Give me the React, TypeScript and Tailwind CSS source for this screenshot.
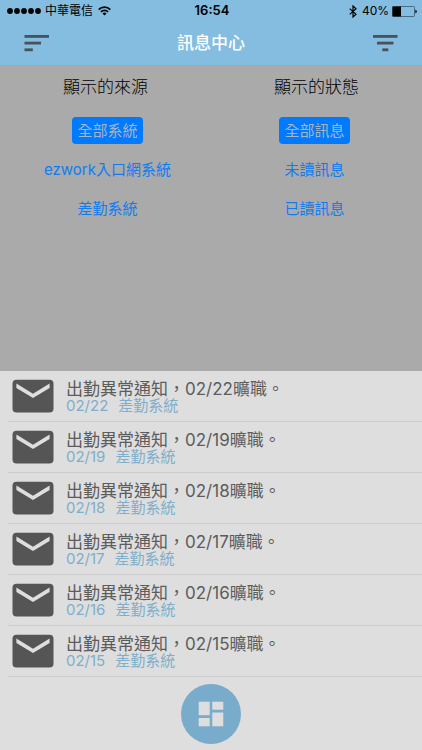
import React from 'react';

interface Message {
  id: number;
  date: string;
  source: string;
}

const messages: Message[] = [
  { id: 1, date: '02/22', source: '差勤系統' },
  { id: 2, date: '02/19', source: '差勤系統' },
  { id: 3, date: '02/18', source: '差勤系統' },
  { id: 4, date: '02/17', source: '差勤系統' },
  { id: 5, date: '02/16', source: '差勤系統' },
  { id: 6, date: '02/15', source: '差勤系統' },
];

const sources = ['全部系統', 'ezwork入口網系統', '差勤系統'];
const statuses = ['全部訊息', '未讀訊息', '已讀訊息'];

function StatusBar() {
  return (
    <div className="grid grid-cols-3 items-center h-[22px] pl-[7px] pr-[5px] text-xs text-black">
      <div className="flex items-center">
        <svg width="35" height="8" viewBox="0 0 35 8" fill="currentColor">
          <circle cx="3" cy="4" r="2.9" />
          <circle cx="10" cy="4" r="2.9" />
          <circle cx="17" cy="4" r="2.9" />
          <circle cx="24" cy="4" r="2.9" />
          <circle cx="31" cy="4" r="2.9" />
        </svg>
        <span className="ml-[3px] whitespace-nowrap">中華電信</span>
        <svg className="ml-[5px]" width="13" height="10" viewBox="0 0 13 10" fill="none" stroke="currentColor" strokeWidth="1.7">
          <path d="M0.7 3.6a8.2 8.2 0 0 1 11.6 0" />
          <path d="M2.9 5.9a5.1 5.1 0 0 1 7.2 0" />
          <path d="M6.5 9.6 4.5 7.5a2.8 2.8 0 0 1 4 0z" fill="currentColor" stroke="none" />
        </svg>
      </div>
      <span className="text-center font-semibold text-[13px]">16:54</span>
      <div className="flex items-center justify-end">
        <svg width="8" height="13" viewBox="0 0 8 13" fill="none" stroke="currentColor" strokeWidth="1.2">
          <path d="M0.7 3.6 7 9.2 4 12V1l3 2.8-6.3 5.6" />
        </svg>
        <span className="ml-[5px]">40%</span>
        <svg className="ml-[3px]" width="25" height="11" viewBox="0 0 25 11">
          <rect x="0.5" y="0.5" width="22" height="10" rx="1" fill="none" stroke="#36566a" strokeWidth="0.8" />
          <rect x="0.5" y="0.5" width="8.5" height="10" fill="#000" />
          <path d="M23.2 3.7a1.8 1.8 0 0 1 0 3.6z" fill="#222" />
        </svg>
      </div>
    </div>
  );
}

function Header() {
  return (
    <header className="bg-[#85bde0] border-b border-[#9aabb7]">
      <StatusBar />
      <div className="flex items-center justify-between h-[43px] px-6">
        <button type="button" aria-label="選單">
          <svg width="25" height="17" viewBox="0 0 25 17" fill="#48525a">
            <rect x="0.5" y="0" width="24.5" height="2.8" />
            <rect x="0.5" y="6.7" width="16.5" height="2.8" />
            <rect x="0.5" y="13.4" width="8.3" height="2.8" />
          </svg>
        </button>
        <h1 className="text-[17px] font-medium text-white">訊息中心</h1>
        <button type="button" aria-label="篩選">
          <svg width="25" height="17" viewBox="0 0 25 17" fill="#48525a">
            <rect x="0" y="0" width="24.5" height="2.8" />
            <rect x="4" y="6.7" width="16.5" height="2.8" />
            <rect x="9.3" y="13.4" width="6" height="2.8" />
          </svg>
        </button>
      </div>
    </header>
  );
}

interface FilterColumnProps {
  title: string;
  options: string[];
  selected: string;
  onSelect: (option: string) => void;
  className: string;
}

function FilterColumn({ title, options, selected, onSelect, className }: FilterColumnProps) {
  return (
    <section className="flex flex-col items-center">
      <h2 className="text-[17px] leading-6 font-light text-black">{title}</h2>
      <div className={`flex flex-col items-center gap-3 mt-[18px] ${className}`}>
        {options.map((option) => (
          <button
            key={option}
            type="button"
            aria-pressed={option === selected}
            onClick={() => onSelect(option)}
            className={`h-[27px] px-[5px] rounded text-[15px] leading-[27px] whitespace-nowrap ${option === selected ? 'bg-[#007aff] text-[#a9b4c2]' : 'text-[#107cf0]'}`}
          >
            {option}
          </button>
        ))}
      </div>
    </section>
  );
}

function MailIcon() {
  return (
    <svg className="shrink-0" width="42" height="34" viewBox="0 0 42 34">
      <rect x="0.5" y="0.8" width="41" height="32.7" rx="4" fill="#555" />
      <path d="M4.4 4.6 21 14.7 37.6 4.6v4.4L21 19 4.4 9z" fill="#dedede" />
    </svg>
  );
}

function MessageRow({ message }: { message: Message }) {
  return (
    <li className="ml-2 border-b border-[#cbcbcd]">
      <a href="#message" className="flex items-center h-[50px] pl-1 gap-3">
        <MailIcon />
        <div className="flex flex-col pt-[2px] whitespace-nowrap">
          <span className="text-[17px] leading-[18px] text-[#5c5c5c]">出勤異常通知，{message.date}曠職。</span>
          <span className="flex gap-[10px] text-[15px] leading-4 text-[#7eaecb]">
            <span>{message.date}</span>
            <span>{message.source}</span>
          </span>
        </div>
      </a>
    </li>
  );
}

export default function App() {
  const [source, setSource] = React.useState(sources[0]);
  const [status, setStatus] = React.useState(statuses[0]);

  return (
    <div lang="zh-Hant" className="flex flex-col min-h-screen bg-[#dedede] font-['Inter','Noto_Sans_CJK_TC',sans-serif]">
      <Header />
      <div className="grid grid-cols-2 min-h-[305px] pt-[9px] pb-6 bg-[#aaa]">
        <FilterColumn title="顯示的來源" options={sources} selected={source} onSelect={setSource} className="pl-1" />
        <FilterColumn title="顯示的狀態" options={statuses} selected={status} onSelect={setStatus} className="pr-1" />
      </div>
      <ul>
        {messages.map((message) => (
          <MessageRow key={message.id} message={message} />
        ))}
      </ul>
      <footer className="flex justify-center pt-[7px] pb-1">
        <button type="button" aria-label="主選單" className="flex items-center justify-center size-[60px] rounded-full bg-[#79abcb]">
          <svg width="26" height="26" viewBox="0 0 26 26" fill="#dedede">
            <rect x="0.7" y="0.7" width="11" height="13.5" />
            <rect x="14.3" y="0.7" width="11" height="8" />
            <rect x="0.7" y="17" width="11" height="8.3" />
            <rect x="14.3" y="11.5" width="11" height="13.8" />
          </svg>
        </button>
      </footer>
    </div>
  );
}
